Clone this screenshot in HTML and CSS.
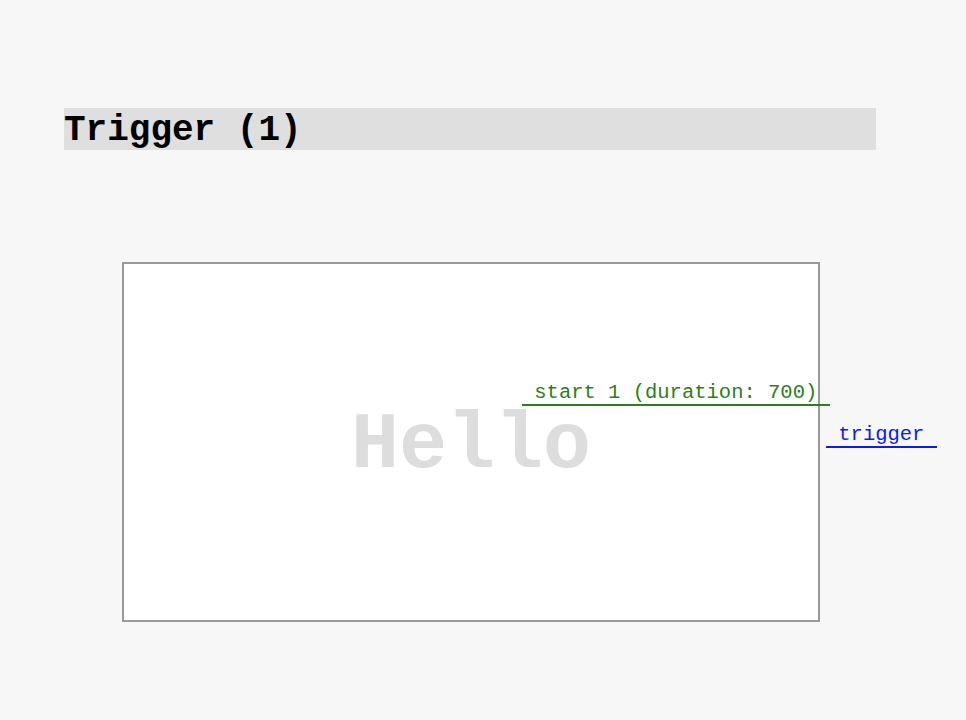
FILE: index.html
```html
<!DOCTYPE html>
<html lang="en">

<head>
  <meta charset="UTF-8" />
  <title>Trigger</title>
  <link rel="stylesheet" href="styles.css">
</head>

<body>
  <div class="page">
    <h1 class="title">Trigger (1)</h1>
    <div class="stage">
      <div class="hello">Hello</div>
      <span class="tag tag-start">&nbsp;start 1 (duration: 700)&nbsp;</span>
      <span class="tag tag-trigger">&nbsp;trigger&nbsp;</span>
    </div>
  </div>
</body>

</html>
```

FILE: styles.css
```css
html,
body {
  margin: 0;
  padding: 0;
  background-color: #f7f7f7;
  font-family: "Liberation Mono", "Courier New", monospace;
}

.page {
  padding: 108px 90px 0 64px;
}

.title {
  margin: 0;
  background-color: #dfdfdf;
  font-size: 36px;
  line-height: 39px;
  padding-top: 3px;
  font-weight: bold;
  color: #000;
}

.stage {
  position: relative;
  margin: 112px 0 0 58px;
  width: 698px;
  height: 360px;
  box-sizing: border-box;
  border: 2px solid #999;
  background: #fff;
  display: flex;
  align-items: center;
  justify-content: center;
}

.hello {
  font-size: 80px;
  font-weight: bold;
  color: #dddddd;
  margin-top: 6px;
}

.tag {
  position: absolute;
  font-size: 20.5px;
  line-height: 22px;
  white-space: nowrap;
}

.tag-start {
  left: 398px;
  top: 118px;
  color: #2e7d1e;
  border-bottom: 2px solid #2e7d1e;
}

.tag-trigger {
  left: 702px;
  top: 160px;
  color: #0a1df0;
  border-bottom: 2px solid #0a1df0;
}
```
